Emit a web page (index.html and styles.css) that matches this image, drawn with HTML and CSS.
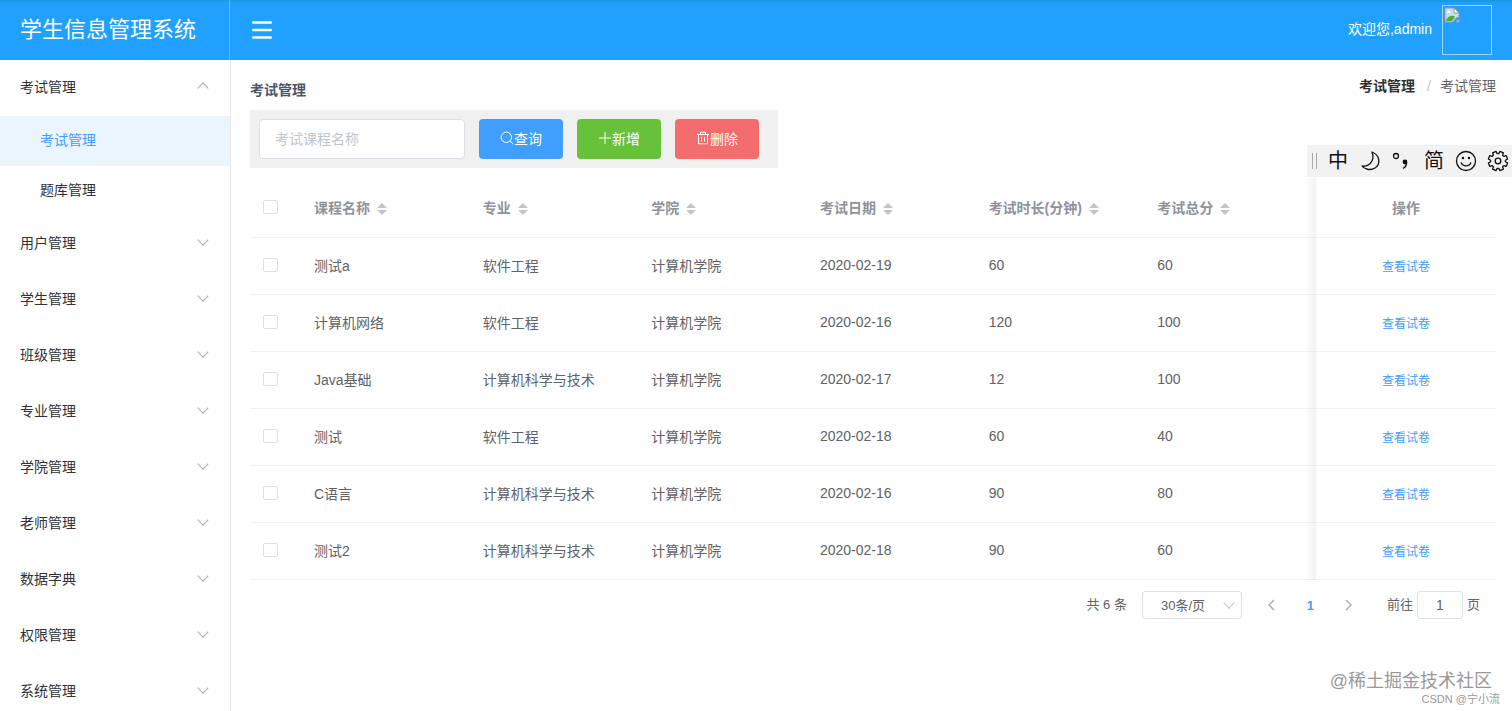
FILE: index.html
```html
<!DOCTYPE html>
<html lang="zh-CN">
<head>
    <meta charset="UTF-8">
    <meta name="viewport" content="width=device-width, initial-scale=1.0">
    <title>学生信息管理系统</title>
    <link rel="stylesheet" href="styles.css">
</head>
<body>
    <header class="header">
        <div class="logo">学生信息管理系统</div>
        <button class="toggle" type="button" aria-label="折叠菜单">
            <svg width="20" height="18" viewBox="0 0 20 18"><path d="M1.3 1.5h17.4M1.3 9h17.4M1.3 16.5h17.4" stroke="#fff" stroke-width="2.6" stroke-linecap="round"/></svg>
        </button>
        <span class="welcome">欢迎您,admin</span>
        <div class="avatar">
            <svg width="16" height="16" viewBox="0 0 16 16">
                <path d="M1 1h9l5 5v4l-3 1-3 4H1z" fill="#c9dcf5" stroke="#9a9a9a"/>
                <path d="M10 1v5h5z" fill="#fff" stroke="#9a9a9a"/>
                <path d="M3 6a2 2 0 0 1 4 0z" fill="#fff"/>
                <path d="M2 14c1-4 4-6 8-5l1 1-3 4z" fill="#4fa83d"/>
                <path d="M12 15l3-3v3z" fill="#d8e4f2" stroke="#9a9a9a"/>
            </svg>
        </div>
    </header>

    <div class="container">
        <nav class="sidebar">
            <a class="menu-item open" href="#">考试管理</a>
            <a class="sub-item active" href="#">考试管理</a>
            <a class="sub-item" href="#">题库管理</a>
            <a class="menu-item" href="#">用户管理</a>
            <a class="menu-item" href="#">学生管理</a>
            <a class="menu-item" href="#">班级管理</a>
            <a class="menu-item" href="#">专业管理</a>
            <a class="menu-item" href="#">学院管理</a>
            <a class="menu-item" href="#">老师管理</a>
            <a class="menu-item" href="#">数据字典</a>
            <a class="menu-item" href="#">权限管理</a>
            <a class="menu-item" href="#">系统管理</a>
        </nav>

        <main class="main">
            <div class="page-head">
                <h1>考试管理</h1>
                <div class="breadcrumb"><a href="#">考试管理</a><i>/</i><span>考试管理</span></div>
            </div>

            <form class="search-bar">
                <input type="text" placeholder="考试课程名称" aria-label="考试课程名称">
                <button type="button" class="btn primary">
                    <svg width="14" height="14" viewBox="0 0 14 14"><circle cx="6.3" cy="6.3" r="5.2"/><path d="M10 10l3.2 3.2"/></svg>查询
                </button>
                <button type="button" class="btn success">
                    <svg width="14" height="14" viewBox="0 0 14 14"><path d="M7 1v12M1 7h12"/></svg>新增
                </button>
                <button type="button" class="btn danger">
                    <svg width="14" height="14" viewBox="0 0 14 14"><path d="M1 3.5h12M4.5 3.5V1.2h5v2.3M2.5 3.5v9.3h9V3.5M5.5 6v4.5M8.5 6v4.5"/></svg>删除
                </button>
            </form>

            <table class="exam-table">
                <colgroup>
                    <col class="col-check">
                    <col><col><col><col><col><col>
                    <col class="col-action">
                </colgroup>
                <thead>
                    <tr>
                        <th><input type="checkbox" aria-label="全选"></th>
                        <th>课程名称<span class="sort"></span></th>
                        <th>专业<span class="sort"></span></th>
                        <th>学院<span class="sort"></span></th>
                        <th>考试日期<span class="sort"></span></th>
                        <th>考试时长(分钟)<span class="sort"></span></th>
                        <th>考试总分<span class="sort"></span></th>
                        <th class="fixed">操作</th>
                    </tr>
                </thead>
                <tbody id="exam-rows">
                    <!-- exam rows will be inserted here -->
                </tbody>
            </table>

            <div class="pagination">
                <span class="total">共 6 条</span>
                <div class="size">
                    <select aria-label="每页条数"><option>30条/页</option></select>
                </div>
                <button type="button" class="prev" aria-label="上一页"><svg width="8" height="12" viewBox="0 0 8 12"><path d="M7 1L2 6l5 5"/></svg></button>
                <button type="button" class="page">1</button>
                <button type="button" class="next" aria-label="下一页"><svg width="8" height="12" viewBox="0 0 8 12"><path d="M1 1l5 5-5 5"/></svg></button>
                <label for="goto">前往</label>
                <input id="goto" type="text" value="1">
                <span>页</span>
            </div>
        </main>
    </div>

    <!-- input method bar floating over the page -->
    <div class="ime">
        <i class="grip"></i>
        <span>中</span>
        <svg viewBox="0 0 22 22"><path d="M13 2c8 3 9 12 3 16-5 3-11 1-13-2 8 1 13-6 10-14z"/></svg>
        <svg viewBox="0 0 22 22"><circle cx="5" cy="6" r="2.5"/><circle cx="14" cy="12" r="2.4" fill="#111" stroke="none"/><path d="M15.500 12c.4 3-.8 5-3.500 6.500"/></svg>
        <span>简</span>
        <svg viewBox="0 0 22 22"><circle cx="11" cy="11" r="9.5"/><path d="M6 12.500c2 4.500 8 4.500 10 0"/><circle cx="8" cy="8" r=".6" fill="#111"/><circle cx="14" cy="8" r=".6" fill="#111"/></svg>
        <svg viewBox="0 0 22 22"><path id="gear" d=""/><circle cx="11" cy="11" r="2.8"/></svg>
    </div>

    <div class="watermark">
        <div class="site">@稀土掘金技术社区</div>
        <div class="author">CSDN @宁小流</div>
    </div>

    <script>
        const exams = [
            ['测试a', '软件工程', '计算机学院', '2020-02-19', 60, 60],
            ['计算机网络', '软件工程', '计算机学院', '2020-02-16', 120, 100],
            ['Java基础', '计算机科学与技术', '计算机学院', '2020-02-17', 12, 100],
            ['测试', '软件工程', '计算机学院', '2020-02-18', 60, 40],
            ['C语言', '计算机科学与技术', '计算机学院', '2020-02-16', 90, 80],
            ['测试2', '计算机科学与技术', '计算机学院', '2020-02-18', 90, 60]
        ];

        const tbody = document.getElementById('exam-rows');
        exams.forEach(exam => {
            const tr = document.createElement('tr');
            tr.innerHTML = `<td><input type="checkbox" aria-label="选择${exam[0]}"></td>`
                + exam.map(cell => `<td>${cell}</td>`).join('')
                + '<td class="fixed"><a href="#">查看试卷</a></td>';
            tbody.appendChild(tr);
        });

        // Gear outline, 8 teeth
        const points = [];
        for (let i = 0; i < 8; i++) {
            [[-16, 7.4], [-11, 9.8], [11, 9.8], [16, 7.4]].forEach(([offset, r]) => {
                const a = (i * 45 + 22.5 + offset) * Math.PI / 180;
                points.push((11 + r * Math.cos(a)).toFixed(1) + ' ' + (11 + r * Math.sin(a)).toFixed(1));
            });
        }
        document.getElementById('gear').setAttribute('d', 'M' + points.join('L') + 'Z');
    </script>
</body>
</html>
```
FILE: styles.css
```css
* {
    box-sizing: border-box;
}
body {
    margin: 0;
    height: 100vh;
    display: flex;
    flex-direction: column;
    overflow: hidden;
    position: relative;
    font-family: "Liberation Sans", "Noto Sans CJK SC", sans-serif;
    font-size: 14px;
    color: #606266;
}
a {
    text-decoration: none;
    color: inherit;
}
button, input, select {
    font-family: inherit;
    font-size: 14px;
    margin: 0;
}
button {
    border: none;
    background: none;
    padding: 0;
}
svg {
    fill: none;
    flex: none;
}

/* header */
.header {
    display: flex;
    align-items: center;
    flex: none;
    height: 60px;
    padding-right: 20px;
    background: #20a0ff;
    box-shadow: inset 0 2px #1a98e0;
    color: #fff;
}
.logo {
    width: 230px;
    height: 100%;
    padding-left: 20px;
    border-right: 1px solid #62bdff;
    font-size: 22px;
    line-height: 60px;
}
.toggle {
    display: flex;
    margin-left: 22px;
}
.welcome {
    margin-left: auto;
    margin-right: 10px;
    padding-bottom: 4px;
}
.avatar {
    width: 50px;
    height: 50px;
    padding: 1px;
    border: 1px solid #a5d5fa;
}

/* sidebar */
.container {
    display: flex;
    flex: 1;
    min-height: 0;
}
.sidebar {
    flex: none;
    width: 231px;
    overflow: hidden;
    border-right: 1px solid #e6e6e6;
    color: #303133;
}
.menu-item {
    display: flex;
    align-items: center;
    justify-content: space-between;
    height: 56px;
    padding: 0 23px 4px 20px;
}
.menu-item::after {
    content: "";
    width: 7px;
    height: 7px;
    margin-bottom: 4px;
    border: solid #a8abb2;
    border-width: 0 1px 1px 0;
    transform: rotate(45deg);
}
.menu-item.open::after {
    margin: 4px 0 0;
    transform: rotate(225deg);
}
.sub-item {
    display: block;
    height: 50px;
    padding-left: 40px;
    line-height: 48px;
}
.sub-item.active {
    background: #ebf5ff;
    color: #409eff;
}

/* content */
.main {
    flex: 1;
    min-width: 0;
    padding: 16px 16px 0 19px;
}
.page-head {
    display: flex;
    justify-content: space-between;
    height: 34px;
    line-height: 20px;
}
h1 {
    margin: 4px 0 0;
    font-size: 14px;
    color: #48576a;
}
.breadcrumb a {
    font-weight: bold;
    color: #303133;
}
.breadcrumb i {
    margin: 0 9px 0 12px;
    font-style: normal;
    color: #c0c4cc;
}
.search-bar {
    display: flex;
    gap: 14px;
    width: fit-content;
    padding: 9px 19px 9px 9px;
    background: #f0f0f0;
}
.search-bar input {
    width: 206px;
    height: 40px;
    padding: 0 15px;
    border: 1px solid #dcdfe6;
    border-radius: 4px;
    outline: none;
}
.search-bar input::placeholder {
    color: #c0c4cc;
}
.btn {
    display: flex;
    align-items: center;
    justify-content: center;
    width: 84px;
    height: 40px;
    padding-bottom: 2px;
    border-radius: 4px;
    color: #fff;
}
.btn svg {
    stroke: #fff;
}
.primary {
    background: #409eff;
}
.success {
    background: #67c23a;
}
.danger {
    background: #f56c6c;
}

/* table */
.exam-table {
    width: 100%;
    margin-top: 10px;
    table-layout: fixed;
    border-collapse: separate;
    border-spacing: 0;
}
.col-check {
    width: 54px;
}
.col-action {
    width: 180px;
}
th, td {
    height: 57px;
    padding: 0 10px 2px;
    border-bottom: 1px solid #eff1f4;
    text-align: left;
}
th {
    height: 60px;
    color: #909399;
}
th:first-child, td:first-child {
    padding-left: 13px;
}
.fixed {
    position: relative;
    text-align: center;
}
.fixed::before {
    content: "";
    position: absolute;
    top: 0;
    bottom: -1px;
    left: -9px;
    width: 9px;
    background: linear-gradient(to right, rgba(0, 0, 0, 0.01), rgba(0, 0, 0, 0.05));
}
.fixed a {
    font-size: 12px;
    color: #409eff;
}
input[type="checkbox"] {
    display: block;
    appearance: none;
    width: 15px;
    height: 14px;
    border: 1px solid #dcdfe6;
    border-radius: 2px;
    background: #fff;
}
.sort {
    display: inline-flex;
    flex-direction: column;
    gap: 2px;
    margin-left: 7px;
    vertical-align: middle;
}
.sort::before, .sort::after {
    content: "";
    border: 5px solid transparent;
}
.sort::before {
    border-top: none;
    border-bottom-color: #c0c4cc;
}
.sort::after {
    border-bottom: none;
    border-top-color: #c0c4cc;
}

/* pagination */
.pagination {
    display: flex;
    align-items: center;
    justify-content: flex-end;
    height: 28px;
    margin-top: 11px;
    padding-right: 16px;
    font-size: 13px;
    line-height: 26px;
}
.pagination svg {
    stroke: #a8abb2;
    stroke-width: 1.4;
}
.size {
    position: relative;
    margin: 0 10px 0 15px;
}
.size::after {
    content: "";
    position: absolute;
    top: 8px;
    right: 9px;
    width: 7px;
    height: 7px;
    border: solid #c0c4cc;
    border-width: 0 1px 1px 0;
    transform: rotate(45deg);
}
.size select {
    appearance: none;
    display: block;
    width: 100px;
    height: 28px;
    padding: 0 18px;
    border: 1px solid #dcdfe6;
    border-radius: 3px;
    background: #fff;
    font-size: 13px;
    color: #606266;
}
.pagination button {
    display: flex;
    align-items: center;
    justify-content: center;
    width: 39px;
    height: 28px;
}
.pagination .page {
    font-size: 13px;
    font-weight: bold;
    color: #409eff;
}
.pagination label {
    margin-left: 18px;
}
.pagination input {
    width: 46px;
    height: 28px;
    margin: 0 4px;
    padding: 0;
    border: 1px solid #dcdfe6;
    border-radius: 3px;
    text-align: center;
    color: #606266;
}

/* input method bar */
.ime {
    position: absolute;
    top: 145px;
    right: 0;
    display: flex;
    align-items: center;
    gap: 10px;
    height: 32px;
    padding: 0 3px 0 5px;
    background: #f2f2f2;
    font-size: 20px;
    line-height: 32px;
    color: #111;
}
.ime span {
    width: 22px;
    text-align: center;
}
.ime svg {
    width: 22px;
    height: 22px;
    stroke: #111;
    stroke-width: 1.3;
    stroke-linejoin: round;
}
.grip {
    width: 5px;
    height: 16px;
    border: solid #aaa;
    border-width: 0 1px;
}

/* watermark */
.watermark {
    position: absolute;
    right: 12px;
    bottom: 4px;
    text-align: right;
    color: #999;
}
.site {
    margin-right: 8px;
    font-size: 18px;
    line-height: 20px;
}
.author {
    font-size: 11px;
    line-height: 16px;
}
```
